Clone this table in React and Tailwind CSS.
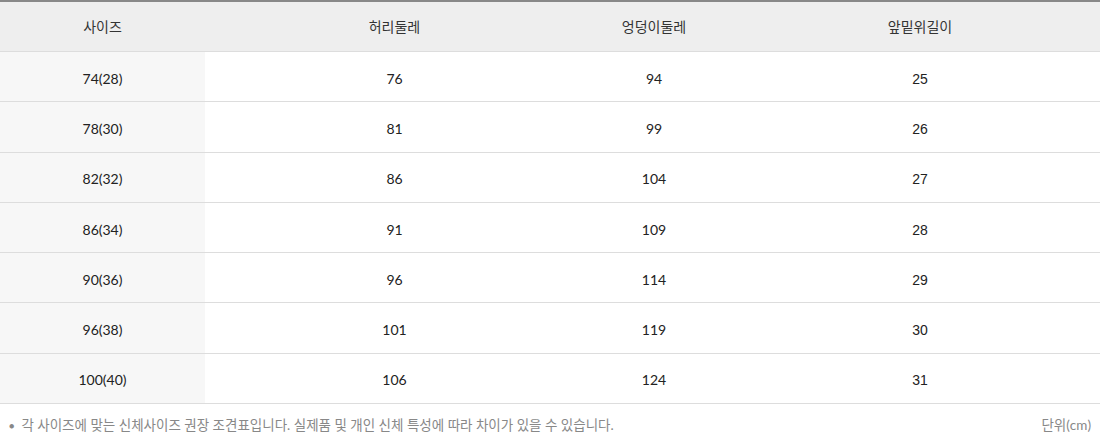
import React from 'react';

const rows = [
  ['74(28)', '76', '94', '25'],
  ['78(30)', '81', '99', '26'],
  ['82(32)', '86', '104', '27'],
  ['86(34)', '91', '109', '28'],
  ['90(36)', '96', '114', '29'],
  ['96(38)', '101', '119', '30'],
  ['100(40)', '106', '124', '31'],
];

const headers = ['사이즈', '허리둘레', '엉덩이둘레', '앞밑위길이'];

const SizeTable = () => {
  return (
    <div
      className="w-[1100px] bg-white text-[#222]"
      style={{ fontFamily: 'Lato, "Noto Sans CJK KR", sans-serif' }}
    >
      <div className="border-t-2 border-[#888]">
        <div className="grid grid-cols-[205px_379px_140px_1fr] h-[50px] bg-[#eeeeee] border-b border-[#ddd] text-[14px] text-[#333]">
          {headers.map((h, i) => (
            <div
              key={h}
              className={`flex items-center justify-center ${i === 3 ? 'pl-[16px]' : ''}`}
            >
              {h}
            </div>
          ))}
        </div>
        {rows.map((r) => (
          <div
            key={r[0]}
            className="grid grid-cols-[205px_379px_140px_1fr] h-[50.3px] border-b border-[#ddd] text-[14px]"
          >
            <div className="flex items-center justify-center bg-[#f7f7f7] pt-[3px]">{r[0]}</div>
            <div className="flex items-center justify-center pt-[3px]">{r[1]}</div>
            <div className="flex items-center justify-center pt-[3px]">{r[2]}</div>
            <div
              className="flex items-center justify-center pl-[16px] pt-[5px]"
              style={{ fontFamily: '"Liberation Sans", Arial, sans-serif' }}
            >
              {r[3]}
            </div>
          </div>
        ))}
      </div>
      <div className="flex items-center justify-between h-[30px] pl-[9px] pr-[9px] pt-[13px] text-[13.5px] text-[#888]">
        <div className="flex items-center">
          <span className="text-[9px] mr-[7px]">●</span>
          <span>각 사이즈에 맞는 신체사이즈 권장 조견표입니다. 실제품 및 개인 신체 특성에 따라 차이가 있을 수 있습니다.</span>
        </div>
        <span>단위(cm)</span>
      </div>
    </div>
  );
};

export default function App() {
  return <SizeTable />;
}
